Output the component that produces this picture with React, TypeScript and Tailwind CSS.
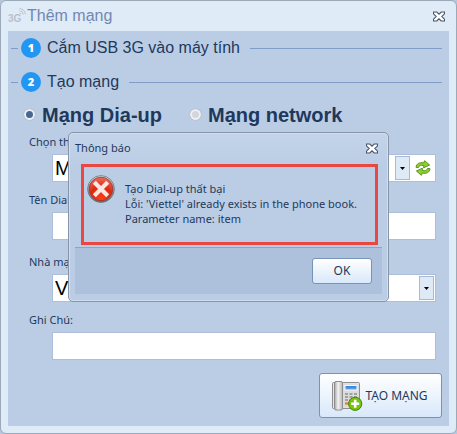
import { useState } from 'react';
import type { ReactNode } from 'react';

const CloseIcon = () => (
    <svg className="h-[11px] w-3" viewBox="0 0 12 11" aria-hidden="true">
        <path
            d="M0.5 1h3.3L6 3.2L8.2 1h3.3v1.8L8.8 5.5L11.5 8.2V10H8.2L6 7.8L3.8 10H0.5V8.2L3.2 5.5L0.5 2.8Z"
            fill="#ffffff"
            stroke="#4b556a"
            strokeWidth="1.1"
        />
    </svg>
);

const SignalIcon = () => (
    <span className="relative flex h-4 w-[18px] items-end text-[10px] leading-[10px] font-bold text-[#b9c1cb]" aria-hidden="true">
        3G
        <svg className="absolute top-0 right-0 h-[7px] w-[7px]" viewBox="0 0 7 7" fill="none" stroke="#b9c1cb">
            <path d="M0.5 0.6A6 6 0 0 1 6.4 6.5M0.5 2.8A3.8 3.8 0 0 1 4.2 6.5" />
            <circle cx="1.2" cy="5.8" r="0.8" fill="#b9c1cb" stroke="none" />
        </svg>
    </span>
);

const ErrorIcon = () => (
    <svg className="h-7 w-7 shrink-0" viewBox="0 0 28 28" role="img" aria-label="Error">
        <defs>
            <linearGradient id="rim" x1="0" y1="0" x2="0" y2="1">
                <stop offset="0" stopColor="#d5dce2" />
                <stop offset="1" stopColor="#5f6b74" />
            </linearGradient>
            <radialGradient id="red" cx="0.5" cy="0.9" r="0.9">
                <stop offset="0" stopColor="#ff3d10" />
                <stop offset="0.55" stopColor="#dd2a12" />
                <stop offset="1" stopColor="#e8705f" />
            </radialGradient>
        </defs>
        <circle cx="14" cy="14" r="13.4" fill="url(#rim)" stroke="#68747e" strokeWidth="0.8" />
        <circle cx="14" cy="14" r="11.8" fill="url(#red)" stroke="#9c3428" strokeWidth="0.8" />
        <path d="M8.8 8.8l10.4 10.4M19.2 8.8L8.8 19.2" stroke="#fbe6e2" strokeWidth="4.2" strokeLinecap="square" />
    </svg>
);

const RefreshIcon = () => (
    <svg className="h-4 w-4" viewBox="0 0 16 16" fill="#8fd12b" stroke="#4b8c10" strokeWidth="0.9" strokeLinejoin="round" aria-hidden="true">
        <path d="M1 7.3C1.4 3.8 4.4 1.9 8.6 2.9L9.6 0.7L14.6 5L8.6 7.8L8.8 5.6C6 4.8 4 5.3 3.4 7.6Z" />
        <path d="M15 8.7C14.6 12.2 11.6 14.1 7.4 13.1L6.4 15.3L1.4 11L7.4 8.2L7.2 10.4C10 11.2 12 10.7 12.6 8.4Z" />
    </svg>
);

const PhoneIcon = () => (
    <svg className="h-8 w-8 shrink-0" viewBox="0 0 32 32" aria-hidden="true">
        <defs>
            <linearGradient id="handset" x1="0" y1="0" x2="1" y2="0">
                <stop offset="0" stopColor="#a5a5a5" />
                <stop offset="0.45" stopColor="#f4f4f4" />
                <stop offset="1" stopColor="#b5b5b5" />
            </linearGradient>
            <linearGradient id="screen" x1="0" y1="0" x2="0" y2="1">
                <stop offset="0" stopColor="#2f78d2" />
                <stop offset="1" stopColor="#66aef5" />
            </linearGradient>
        </defs>
        <rect x="1.5" y="2.5" width="27" height="26" rx="1" fill="#e6e6e6" stroke="#8e8e8e" />
        <rect x="12" y="3.5" width="16" height="24" fill="#dcdcdc" />
        <rect x="3.5" y="1.5" width="8" height="28.5" rx="1.5" fill="url(#handset)" stroke="#8e8e8e" />
        <rect x="14" y="5.5" width="12" height="4.5" fill="url(#screen)" stroke="#f7f7f7" />
        <path d="M14 14h3M18.5 14h3M23 14h3M14 17h3M18.5 17h3M23 17h3M14 20h3M18.5 20h3" stroke="#8e8e8e" strokeWidth="1.3" />
        <path d="M14 23.5h4" stroke="#ff7614" strokeWidth="2.2" />
        <circle cx="24.2" cy="23.8" r="6.6" fill="#78c40c" stroke="#3f8307" />
        <path d="M24.2 19.8v8M20.2 23.8h8" stroke="#ffffff" strokeWidth="2.6" />
    </svg>
);

const StepHeading = ({ number, children }: { number: number; children: ReactNode }) => (
    <h2 className="flex h-[34px] items-center pr-[7px] pl-[3px] font-['Liberation_Sans',sans-serif] text-base">
        <span className="h-px w-[7px] bg-[#7f9dc8]"></span>
        <span className="mr-1.5 ml-[3px] flex h-5 w-5 items-center justify-center rounded-full bg-[#2196f3] font-['Noto_Sans',sans-serif] text-[11px] font-black text-white">
            {number}
        </span>
        {children}
        <span className="ml-2.5 h-px flex-1 bg-[#7f9dc8]"></span>
    </h2>
);

const RadioOption = ({ label, checked, onChange }: { label: string; checked: boolean; onChange: () => void }) => (
    <label className="flex items-center gap-[7px] font-['Liberation_Sans',sans-serif] text-xl font-bold">
        <input
            type="radio"
            name="networkType"
            checked={checked}
            onChange={onChange}
            className="h-[11px] w-[11px] appearance-none rounded-full border-2 border-[#eef1f4] bg-[#d3d7dc] shadow-[0_0_1px_#7d8896] checked:bg-[#466792]"
        />
        {label}
    </label>
);

// Combo box with the flat arrow button
const Combo = ({ id, value }: { id: string; value: string }) => (
    <div className="relative flex-1">
        <select id={id} defaultValue={value} className="h-full w-full appearance-none pr-5 pl-0.5 font-['Liberation_Sans',sans-serif] text-xl leading-6 text-black outline-none">
            <option>{value}</option>
        </select>
        <span className="pointer-events-none absolute inset-y-px right-px flex w-[15px] items-center justify-center border border-[#a9b9d5] bg-[#dfeaf7]">
            <svg className="h-[3px] w-[5px]" viewBox="0 0 5 3" aria-hidden="true">
                <path d="M0 0h5L2.5 3z" fill="#000000" />
            </svg>
        </span>
    </div>
);

const Field = ({ id, label, className = '', children }: { id: string; label: string; className?: string; children: ReactNode }) => (
    <div className={className}>
        <label htmlFor={id} className="flex h-6 items-center pl-[21px]">{label}</label>
        <div className="mr-[13px] ml-11 flex h-7 border border-[#adbedb] bg-white">{children}</div>
    </div>
);

const buttonClass = 'flex items-center justify-center rounded-[3px] border border-[#7893b8] bg-linear-to-b from-white to-[#d9e8fa] text-xs';

export default function App() {
    const [networkType, setNetworkType] = useState('dialup');
    const [dialogOpen, setDialogOpen] = useState(true);

    return (
        <div className="relative bg-[#b5c6dd] font-['Noto_Sans',sans-serif] text-[11px] text-[#1e395b]">
            <div className="rounded-md border border-[#9ba9b9] bg-[#dfebf7] px-[7px] pb-[7px]">
                <header className="flex h-[30px] items-center justify-between pr-1">
                    <h1 className="flex items-center gap-px font-['Liberation_Sans',sans-serif] text-base text-[#7288b2]">
                        <SignalIcon />
                        Thêm mạng
                    </h1>
                    <button type="button" aria-label="Close">
                        <CloseIcon />
                    </button>
                </header>

                <main className="bg-[#bbcde5] pb-2">
                    <StepHeading number={1}>Cắm USB 3G vào máy tính</StepHeading>
                    <StepHeading number={2}>Tạo mạng</StepHeading>

                    <form onSubmit={(e) => e.preventDefault()}>
                        <div className="flex h-[31px] items-center gap-7 pl-4">
                            <RadioOption label="Mạng Dia-up" checked={networkType === 'dialup'} onChange={() => setNetworkType('dialup')} />
                            <RadioOption label="Mạng network" checked={networkType === 'network'} onChange={() => setNetworkType('network')} />
                        </div>

                        <div className="flex flex-col gap-1.5">
                            <Field id="device" label="Chọn thiết bị:">
                                <Combo id="device" value="Modem" />
                                <button type="button" aria-label="Refresh" className="flex w-6 items-center justify-center">
                                    <RefreshIcon />
                                </button>
                            </Field>
                            <Field id="name" label="Tên Dial-up:">
                                <input id="name" type="text" className="w-full px-1 outline-none" />
                            </Field>
                            <Field id="carrier" label="Nhà mạng:" className="pt-1">
                                <Combo id="carrier" value="Viettel" />
                            </Field>
                            <Field id="note" label="Ghi Chú:">
                                <input id="note" type="text" className="w-full px-1 outline-none" />
                            </Field>
                        </div>

                        <div className="mt-[13px] flex justify-end pr-[7px]">
                            <button type="submit" className={`${buttonClass} h-[45px] w-[123px] gap-0.5 pr-0.5`}>
                                <PhoneIcon />
                                TẠO MẠNG
                            </button>
                        </div>
                    </form>
                </main>
            </div>

            {dialogOpen && (
                <div className="absolute inset-0 flex items-center justify-center">
                    <div role="alertdialog" aria-labelledby="dialog-title" className="w-[321px] rounded-[5px] border border-[#8794a8] bg-[#bbcde5] bg-linear-to-b from-[#c3d4ea] to-[#bbcde5] to-20% px-1.5 pb-[7px] shadow-[inset_0_0_0_1px_#cfdef0]">
                        <div className="flex h-[31px] items-center justify-between pr-1">
                            <h2 id="dialog-title">Thông báo</h2>
                            <button type="button" aria-label="Close" onClick={() => setDialogOpen(false)}>
                                <CloseIcon />
                            </button>
                        </div>
                        <div className="mr-1 ml-1.5 flex h-[81px] gap-2.5 border-3 border-[#ea4742] px-[3px] pt-2">
                            <ErrorIcon />
                            <p className="pt-1.5 leading-[15px] whitespace-nowrap">
                                Tạo Dial-up thất bại
                                <br />
                                Lỗi: 'Viettel' already exists in the phone book.
                                <br />
                                Parameter name: item
                            </p>
                        </div>
                        <div className="mt-0.5 flex h-[47px] items-center justify-end border-t border-[#8ca4c6] bg-[#adc1dc] pr-2.5">
                            <button type="button" onClick={() => setDialogOpen(false)} className={`${buttonClass} h-[26px] w-[60px]`}>
                                OK
                            </button>
                        </div>
                    </div>
                </div>
            )}
        </div>
    );
}
